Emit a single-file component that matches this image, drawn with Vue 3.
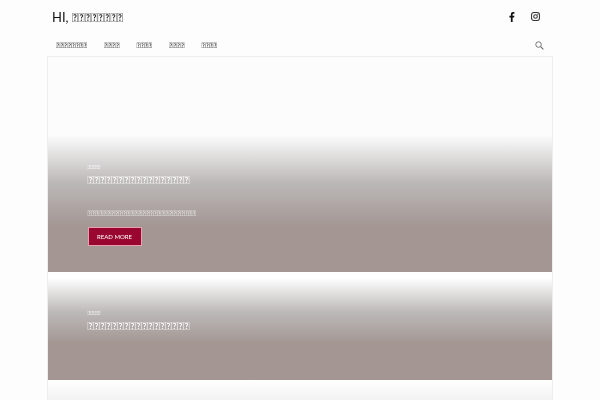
<script setup>
const rep = (c, n) => c.repeat(n)
const brandText = rep('\uE000', 8)
const navItems = [rep('\uE000', 8), rep('\uE000', 4), rep('\uE000', 4), rep('\uE000', 4), rep('\uE000', 4)]
const posts = [
  { id: 1, tag: rep('\uE000', 4), title: rep('\uE000', 17), text: rep('\uE000', 28), more: true },
  { id: 2, tag: rep('\uE000', 4), title: rep('\uE000', 17), text: '', more: false }
]
</script>

<template>
  <div class="page">
    <header class="top">
      <h1 class="brand gray">HI, <span class="brand-name">{{ brandText }}</span></h1>
      <div class="social">
        <svg class="ico" viewBox="0 0 10 14" width="7" height="10" aria-label="Facebook"><path fill="#111" d="M6.6 14V7.7h2.1l.4-2.5H6.6V3.7c0-.7.3-1.2 1.3-1.2h1.3V.2C8.9.1 8.200 0 7.400 0 5.500 0 4.100 1.200 4.100 3.400v1.800H2v2.500h2.100V14z"/></svg>
        <svg class="ico" viewBox="0 0 16 16" width="9" height="9" aria-label="Instagram"><rect x="1" y="1" width="14" height="14" rx="4" fill="none" stroke="#333" stroke-width="1.800"/><circle cx="8" cy="8" r="3.200" fill="none" stroke="#333" stroke-width="1.800"/><circle cx="12" cy="4" r="1" fill="#333"/></svg>
      </div>
    </header>
    <nav class="nav">
      <a v-for="(item, i) in navItems" :key="i" class="nav-item gray">{{ item }}</a>
      <svg class="search" viewBox="0 0 14 14" width="9" height="9" aria-label="Search"><circle cx="5.500" cy="5.500" r="4.300" fill="none" stroke="#666" stroke-width="1.400"/><path d="M8.800 8.800L13 13" stroke="#666" stroke-width="1.600" fill="none"/></svg>
    </nav>
    <main class="card">
      <article v-for="p in posts" :key="p.id" class="post" :class="p.more ? 'post-a' : 'post-b'">
        <div class="tag gray">{{ p.tag }}</div>
        <h2 class="title gray">{{ p.title }}</h2>
        <p v-if="p.text" class="text gray">{{ p.text }}</p>
        <a v-if="p.more" class="btn"><span class="gray">READ MORE</span></a>
      </article>
      <div class="rest"></div>
    </main>
  </div>
</template>

<style scoped>
.page { width: 600px; height: 400px; overflow: hidden; background: #fdfdfd; font-family: "Lato", sans-serif; }
.gray { will-change: opacity; }
.top { height: 33px; padding: 0 60px 0 52px; display: flex; align-items: center; justify-content: space-between; }
.brand { margin: 0; font-size: 13px; font-weight: 400; color: #111; }
.brand-name { font-size: 12.1px; }
.social { display: flex; align-items: center; gap: 16px; }
.ico { display: block; }
.nav { height: 22px; padding: 1px 56px 0; display: flex; align-items: center; gap: 17px; }
.nav-item { font-size: 7.300px; color: #111; }
.search { margin-left: auto; }
.card { margin: 0 47px; border: 1px solid #eee; border-bottom: 0; height: 344px; box-sizing: border-box; background: #fcfcfc; }
.post { padding: 0 39.500px; box-sizing: border-box; display: flex; flex-direction: column; align-items: flex-start; color: #fff; }
.post-a { height: 215px; padding-top: 107px; background: linear-gradient(#fcfcfc 0, #fcfcfc 78px, #bcb9b8 125px, #a39693 170px); }
.post-b { height: 108px; padding-top: 38px; background: linear-gradient(#fff 0, #fff 6px, #bcb9b8 40px, #a39693 72px); }
.tag { font-size: 6px; line-height: 6px; }
.title { margin: 3px 0 0; font-size: 11.300px; line-height: 13px; font-weight: 400; }
.text { margin: 24px 0 0; font-size: 7.300px; line-height: 8px; color: #eee; }
.btn { margin-top: 9px; width: 54px; height: 19px; box-sizing: border-box; border: 1px solid #e8a0b0; background: #99062f; color: #fff; font-size: 6px; display: flex; align-items: center; justify-content: center; }
.rest { height: 20px; background: linear-gradient(#fff, #f2f2f2); }
</style>
